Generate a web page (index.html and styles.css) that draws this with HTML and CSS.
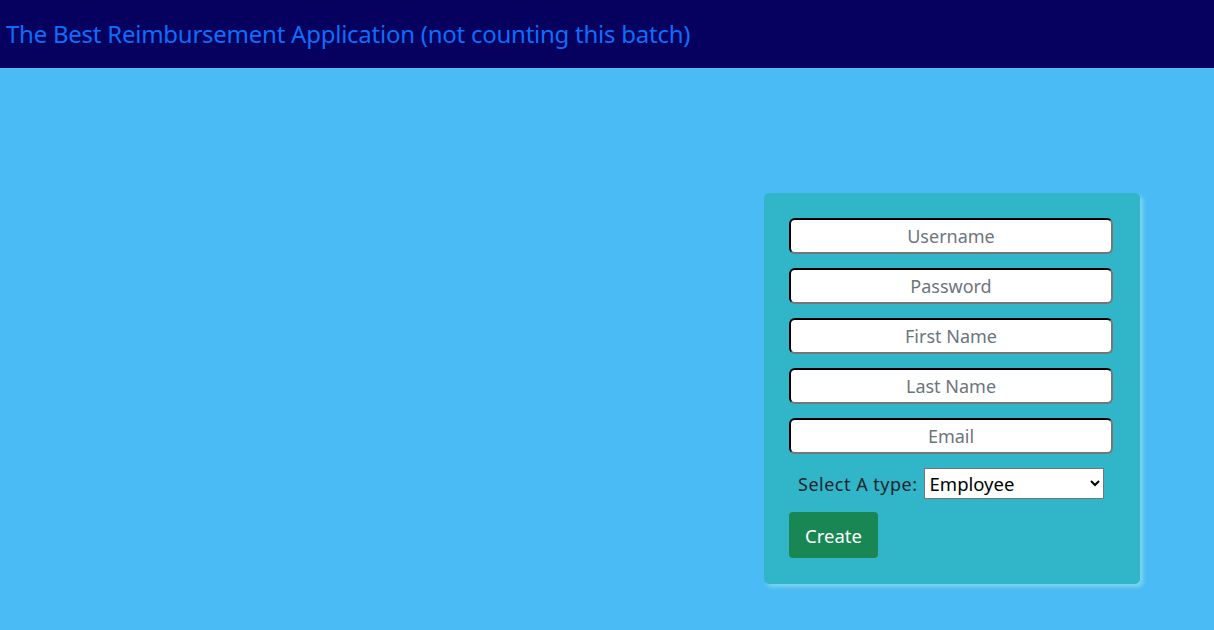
FILE: index.html
```html
<!DOCTYPE html>
<html lang="en">
<head>
<meta charset="utf-8">
<title>Reimbursement</title>
<link rel="stylesheet" href="styles.css">
</head>
<body>
<header class="topbar">
  <h1 class="brand">The Best Reimbursement Application (not counting this batch)</h1>
</header>
<main class="page">
  <form class="card">
    <input class="field" type="text" placeholder="Username">
    <input class="field" type="password" placeholder="Password">
    <input class="field" type="text" placeholder="First Name">
    <input class="field" type="text" placeholder="Last Name">
    <input class="field" type="text" placeholder="Email">
    <div class="type-row">
      <label class="type-label" for="type">Select A type:</label>
      <select class="type-select" id="type">
        <option>Employee</option>
        <option>Manager</option>
      </select>
    </div>
    <div class="actions">
      <button class="btn-create" type="button">Create</button>
    </div>
  </form>
</main>
</body>
</html>
```

FILE: styles.css
```css
* { box-sizing: border-box; }
html, body { margin: 0; padding: 0; }
body {
  background: #4abbf5;
  font-family: "Noto Sans", "Open Sans", sans-serif;
  height: 630px;
  overflow: hidden;
}
.topbar {
  background: #06005e;
  height: 68px;
  display: flex;
  align-items: center;
  padding-left: 6px;
  padding-bottom: 1px;
}
.brand {
  margin: 0;
  font-weight: 400;
  font-size: 24px;
  color: #0d6efd;
  letter-spacing: -0.25px;
}
.page {
  display: flex;
  justify-content: flex-end;
  padding: 125px 74px 0 0;
}
.card {
  width: 376px;
  background: #31b5c9;
  border-radius: 5px;
  padding: 25px 25px 26px 25px;
  box-shadow: 3px 3px 4px rgba(140, 220, 235, 0.8);
  display: flex;
  flex-direction: column;
}
.field {
  width: 324px;
  height: 36px;
  margin-bottom: 14px;
  border: 2px inset #767676;
  border-top-color: #1f1f1f;
  border-left-color: #1f1f1f;
  border-radius: 6px;
  background: #fff;
  text-align: center;
  font-family: inherit;
  font-size: 18px;
  padding: 0 4px;
}
.field::placeholder { color: #6c757d; }
.type-row {
  display: flex;
  align-items: center;
  padding-left: 9px;
  gap: 6px;
}
.type-label {
  color: #212529;
  font-size: 18px;
  letter-spacing: 0.5px;
}
.type-select {
  width: 180px;
  height: 31px;
  font-family: inherit;
  font-size: 18.5px;
  color: #000;
  background: #fff;
  border: 1px solid #767676;
  border-radius: 0;
  padding: 0 1px;
}
.actions {
  margin-top: 13px;
  display: flex;
}
.btn-create {
  background: #198754;
  color: #fff;
  border: none;
  border-radius: 4px;
  width: 89px;
  height: 46px;
  font-family: inherit;
  font-size: 18.5px;
  padding: 0;
}
```
